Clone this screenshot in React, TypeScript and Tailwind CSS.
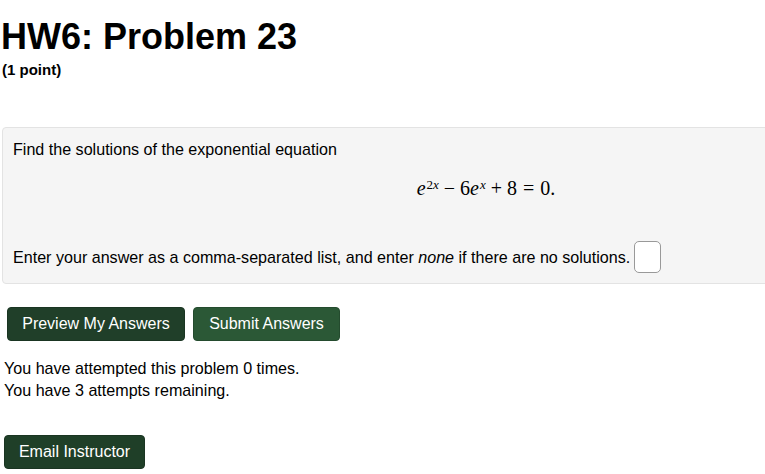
export default function App() {
  const sans = { fontFamily: '"Liberation Sans", Arial, Helvetica, sans-serif' }
  return (
    <div className="w-[765px] h-[474px] overflow-hidden bg-white text-black font-['Liberation_Sans',Arial,sans-serif]">
      <h1 className="mt-[17px] ml-[1px] text-[36px] leading-[40px] font-bold whitespace-nowrap">
        HW6: Problem 23
      </h1>
      <div className="mt-[3px] ml-[2px] text-[15px] leading-[20px] font-bold">(1 point)</div>

      <div className="mt-[47px] ml-[2px] w-[968px] rounded-[4px] border border-[#e3e3e3] bg-[#f5f5f5] p-[10px] text-[16.1px] leading-[22px]">
        <p>Find the solutions of the exponential equation</p>

        <div className="mt-[16px] flex justify-center font-['Liberation_Serif',serif] text-[20px] leading-[24px] whitespace-nowrap">
          <span>
            <i>e</i>
            <sup className="text-[13px] ml-[1px]">
              2<i>x</i>
            </sup>
            <span className="mx-[5px]">−</span>
            6<i>e</i>
            <sup className="text-[13px] ml-[1px]">
              <i>x</i>
            </sup>
            <span className="mx-[5px]">+</span>
            8<span className="mx-[6px]">=</span>0.
          </span>
        </div>

        <div className="mt-[41px] flex items-center whitespace-nowrap">
          <span>
            Enter your answer as a comma-separated list, and enter <i>none</i> if there are no solutions.
          </span>
          <span className="ml-[4px] inline-block h-[32px] w-[27px] rounded-[5px] border border-[#999] bg-white"></span>
        </div>
      </div>

      <div className="mt-[23px] ml-[7px] flex gap-[8px]" style={sans}>
        <button className="h-[34px] w-[178px] rounded-[4px] border border-[#1a3522] bg-[#203f29] text-[16px] text-white">
          Preview My Answers
        </button>
        <button className="h-[34px] w-[147px] rounded-[4px] border border-[#244b2e] bg-[#2b5836] text-[16px] text-white">
          Submit Answers
        </button>
      </div>

      <div className="mt-[16px] ml-[4px] text-[16.1px] leading-[22px]">
        <p>You have attempted this problem 0 times.</p>
        <p>You have 3 attempts remaining.</p>
      </div>

      <button
        className="mt-[34px] ml-[4px] h-[34px] w-[141px] rounded-[4px] border border-[#1a3522] bg-[#1f3f28] text-[16px] text-white"
        style={sans}
      >
        Email Instructor
      </button>
    </div>
  )
}
